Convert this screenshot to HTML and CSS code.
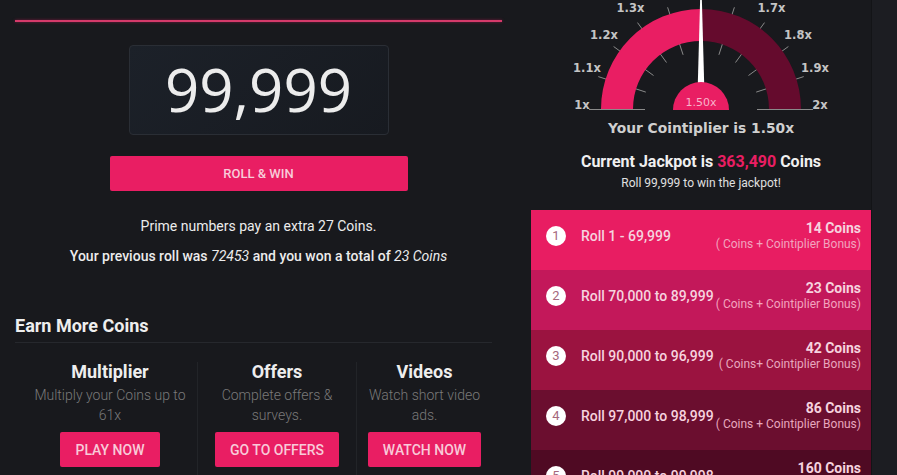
FILE: index.html
```html
<!DOCTYPE html>
<html lang="en">
<head>
    <meta charset="UTF-8">
    <meta name="viewport" content="width=device-width, initial-scale=1.0">
    <title>Roll &amp; Win</title>
    <link rel="stylesheet" href="styles.css">
</head>
<body>
<div class="page">
    <main class="left">
        <div class="accent-line"></div>
        <div class="roll-box">99,999</div>
        <button class="roll-btn">ROLL &amp; WIN</button>
        <p class="note">Prime numbers pay an extra 27 Coins.</p>
        <p class="note note-strong">Your previous roll was <em>72453</em> and you won a total of <em>23 Coins</em></p>

        <section class="earn">
            <h3 class="earn-title">Earn More Coins</h3>
            <div class="earn-grid">
                <div class="earn-item">
                    <h4>Multiplier</h4>
                    <p>Multiply your Coins up to 61x</p>
                    <button class="pink-btn">PLAY NOW</button>
                </div>
                <div class="earn-item">
                    <h4>Offers</h4>
                    <p>Complete offers &amp; surveys.</p>
                    <button class="pink-btn">GO TO OFFERS</button>
                </div>
                <div class="earn-item">
                    <h4>Videos</h4>
                    <p>Watch short video ads.</p>
                    <button class="pink-btn">WATCH NOW</button>
                </div>
            </div>
        </section>
    </main>

    <aside class="right">
        <svg class="gauge" width="340" height="114" viewBox="0 0 340 114">
            <!-- ticks -->
            <g stroke="#8a8a8a" stroke-width="1">
                <line x1="58" y1="109.5" x2="114" y2="109.5"/>
                <line x1="67.3" y1="76.6" x2="114.8" y2="92.1"/>
                <line x1="82.6" y1="46.5" x2="122.5" y2="75.5"/>
                <line x1="106.5" y1="22.6" x2="135.5" y2="62.5"/>
                <line x1="136.6" y1="7.3" x2="152.1" y2="54.8"/>
                <line x1="203.4" y1="7.3" x2="187.9" y2="54.8"/>
                <line x1="233.5" y1="22.6" x2="204.5" y2="62.5"/>
                <line x1="257.4" y1="46.5" x2="217.5" y2="75.5"/>
                <line x1="272.7" y1="76.6" x2="225.2" y2="92.1"/>
                <line x1="226" y1="109.5" x2="282" y2="109.5"/>
            </g>
            <!-- arc -->
            <path d="M70 109 A100 100 0 0 1 170 9 L170 41 A68 68 0 0 0 102 109 Z" fill="#e91e63"/>
            <path d="M170 9 A100 100 0 0 1 270 109 L238 109 A68 68 0 0 0 170 41 Z" fill="#650b2d"/>
            <!-- labels -->
            <g class="gauge-labels" text-anchor="middle">
                <text x="51" y="108.5">1x</text>
                <text x="56" y="72">1.1x</text>
                <text x="73" y="38.5">1.2x</text>
                <text x="99.5" y="12">1.3x</text>
                <text x="240.5" y="12">1.7x</text>
                <text x="267" y="38.5">1.8x</text>
                <text x="284" y="72">1.9x</text>
                <text x="289" y="108.5">2x</text>
            </g>
            <!-- needle -->
            <polygon points="166.8,84 173.2,84 170.6,-10 169.4,-10" fill="#ffffff"/>
            <!-- hub -->
            <path d="M142 110 A28 28 0 0 1 198 110 Z" fill="#e91e63"/>
            <text class="hub-text" x="170" y="106" text-anchor="middle">1.50x</text>
        </svg>
        <div class="cointiplier">Your Cointiplier is 1.50x</div>
        <div class="jackpot">Current Jackpot is <span class="jackpot-value">363,490</span> Coins</div>
        <div class="jackpot-sub">Roll 99,999 to win the jackpot!</div>

        <ul class="payouts">
            <li class="payout payout-1">
                <span class="payout-num">1</span>
                <span class="payout-range">Roll 1 - 69,999</span>
                <span class="payout-prize"><b>14 Coins</b><small>( Coins + Cointiplier Bonus)</small></span>
            </li>
            <li class="payout payout-2">
                <span class="payout-num">2</span>
                <span class="payout-range">Roll 70,000 to 89,999</span>
                <span class="payout-prize"><b>23 Coins</b><small>( Coins + Cointiplier Bonus)</small></span>
            </li>
            <li class="payout payout-3">
                <span class="payout-num">3</span>
                <span class="payout-range">Roll 90,000 to 96,999</span>
                <span class="payout-prize"><b>42 Coins</b><small>( Coins+ Cointiplier Bonus)</small></span>
            </li>
            <li class="payout payout-4">
                <span class="payout-num">4</span>
                <span class="payout-range">Roll 97,000 to 98,999</span>
                <span class="payout-prize"><b>86 Coins</b><small>( Coins + Cointiplier Bonus)</small></span>
            </li>
            <li class="payout payout-5">
                <span class="payout-num">5</span>
                <span class="payout-range">Roll 99,000 to 99,998</span>
                <span class="payout-prize"><b>160 Coins</b><small>( Coins + Cointiplier Bonus)</small></span>
            </li>
        </ul>
    </aside>

    <div class="edge"></div>
</div>
</body>
</html>
```

FILE: styles.css
```css
/* Base */
body {
    margin: 0;
    background-color: #18191d;
    color: #e6e6e6;
    font-family: Roboto, "Liberation Sans", sans-serif;
    overflow: hidden;
}

.page {
    display: flex;
    height: 475px;
    overflow: hidden;
}

.left > *,
.right > * {
    flex-shrink: 0;
}

/* Left column */
.left {
    width: 487px;
    padding: 20px 29px 0 15px;
    display: flex;
    flex-direction: column;
    align-items: center;
}

.accent-line {
    align-self: stretch;
    height: 2px;
    background-color: #d43a6a;
    box-shadow: 0 0 3px rgba(233, 30, 99, 0.5);
}

.roll-box {
    margin-top: 23px;
    width: 258px;
    height: 86px;
    border: 1px solid #2a2e35;
    border-radius: 4px;
    background: linear-gradient(135deg, #1c2129, #171a20);
    display: flex;
    align-items: center;
    justify-content: center;
    font-family: "Open Sans", sans-serif;
    font-size: 60px;
    color: #ececec;
    padding-bottom: 2px;
    box-sizing: content-box;
}

.roll-btn {
    margin-top: 21px;
    width: 298px;
    height: 35px;
    border: none;
    border-radius: 2px;
    background-color: #e91e63;
    color: #f8cbd9;
    font-family: Roboto, sans-serif;
    font-size: 13px;
    font-weight: 500;
}

.note {
    margin: 25px 0 0;
    font-size: 14px;
    line-height: 20px;
    color: #ececec;
}

.note-strong {
    margin-top: 10px;
    font-weight: 500;
}

.note-strong em {
    font-weight: 400;
}

/* Earn more coins */
.earn {
    align-self: stretch;
    margin-top: 48px;
}

.earn-title {
    margin: 0 10px 0 0;
    padding-bottom: 4px;
    border-bottom: 1px solid #26282d;
    font-size: 18px;
    line-height: 24px;
    font-weight: 700;
    color: #eeeeee;
}

.earn-grid {
    display: grid;
    grid-template-columns: 174px 159px 136px;
    margin: 19px 0 0 8px;
}

.earn-item {
    display: flex;
    flex-direction: column;
    align-items: center;
    text-align: center;
    padding: 0 8px;
    height: 120px;
}

.earn-item + .earn-item {
    border-left: 1px solid #222428;
    padding: 0 10px;
}

.earn-item h4 {
    margin: 0;
    font-size: 18px;
    line-height: 20px;
    font-weight: 700;
    color: #eeeeee;
}

.earn-item p {
    margin: 3px 0 0;
    font-size: 14px;
    line-height: 20px;
    font-weight: 300;
    color: #7a7a7a;
}

.pink-btn {
    margin-top: 7px;
    height: 35px;
    padding: 0 15px;
    border: none;
    border-radius: 2px;
    background-color: #e91e63;
    color: #f8cbd9;
    font-family: Roboto, sans-serif;
    font-size: 14px;
    font-weight: 500;
}

/* Right column */
.right {
    width: 340px;
    display: flex;
    flex-direction: column;
    align-items: center;
}

.gauge {
    display: block;
}

.gauge-labels text {
    font-family: "DejaVu Sans", sans-serif;
    font-size: 11.5px;
    font-weight: 700;
    fill: #c4c4c4;
}

.hub-text {
    font-family: "DejaVu Sans", sans-serif;
    font-size: 11px;
    fill: #f8b4ca;
}

.cointiplier {
    margin-top: 5px;
    font-family: "DejaVu Sans", sans-serif;
    font-size: 13.8px;
    font-weight: 700;
    line-height: 18px;
    color: #cfcfcf;
}

.jackpot {
    margin-top: 15px;
    font-size: 16px;
    line-height: 20px;
    font-weight: 700;
    color: #f0f0f0;
}

.jackpot-value {
    color: #e91e63;
}

.jackpot-sub {
    margin-top: 3px;
    font-size: 12px;
    line-height: 16px;
    color: #e0e0e0;
}

.payouts {
    list-style: none;
    margin: 19px 0 0;
    padding: 0;
    align-self: stretch;
}

.payout {
    height: 60px;
    box-sizing: border-box;
    padding: 0 10px 8px 15px;
    display: flex;
    align-items: center;
    color: #f6d3df;
}

.payout-1 { background-color: #e81d62; }
.payout-2 { background-color: #c3185a; }
.payout-3 { background-color: #9b1340; }
.payout-4 { background-color: #6b0e2f; }
.payout-5 { background-color: #4f0a23; }

.payout-num {
    width: 20px;
    height: 20px;
    border-radius: 50%;
    background-color: #ffffff;
    color: #a5677c;
    font-size: 13px;
    line-height: 20px;
    text-align: center;
    flex-shrink: 0;
}

.payout-range {
    margin-left: 15px;
    font-size: 14px;
    font-weight: 500;
    white-space: nowrap;
}

.payout-prize {
    margin-left: auto;
    display: flex;
    flex-direction: column;
    align-items: flex-end;
    white-space: nowrap;
}

.payout-prize b {
    font-size: 14px;
    line-height: 16px;
    font-weight: 700;
}

.payout-prize small {
    font-size: 12px;
    line-height: 16px;
    color: #f2a3be;
}

.payout-3 .payout-prize small,
.payout-4 .payout-prize small,
.payout-5 .payout-prize small {
    color: #e7a7be;
}

.edge {
    flex: 1;
    background-color: #1c1d22;
    border-left: 1px solid #131417;
}
```
